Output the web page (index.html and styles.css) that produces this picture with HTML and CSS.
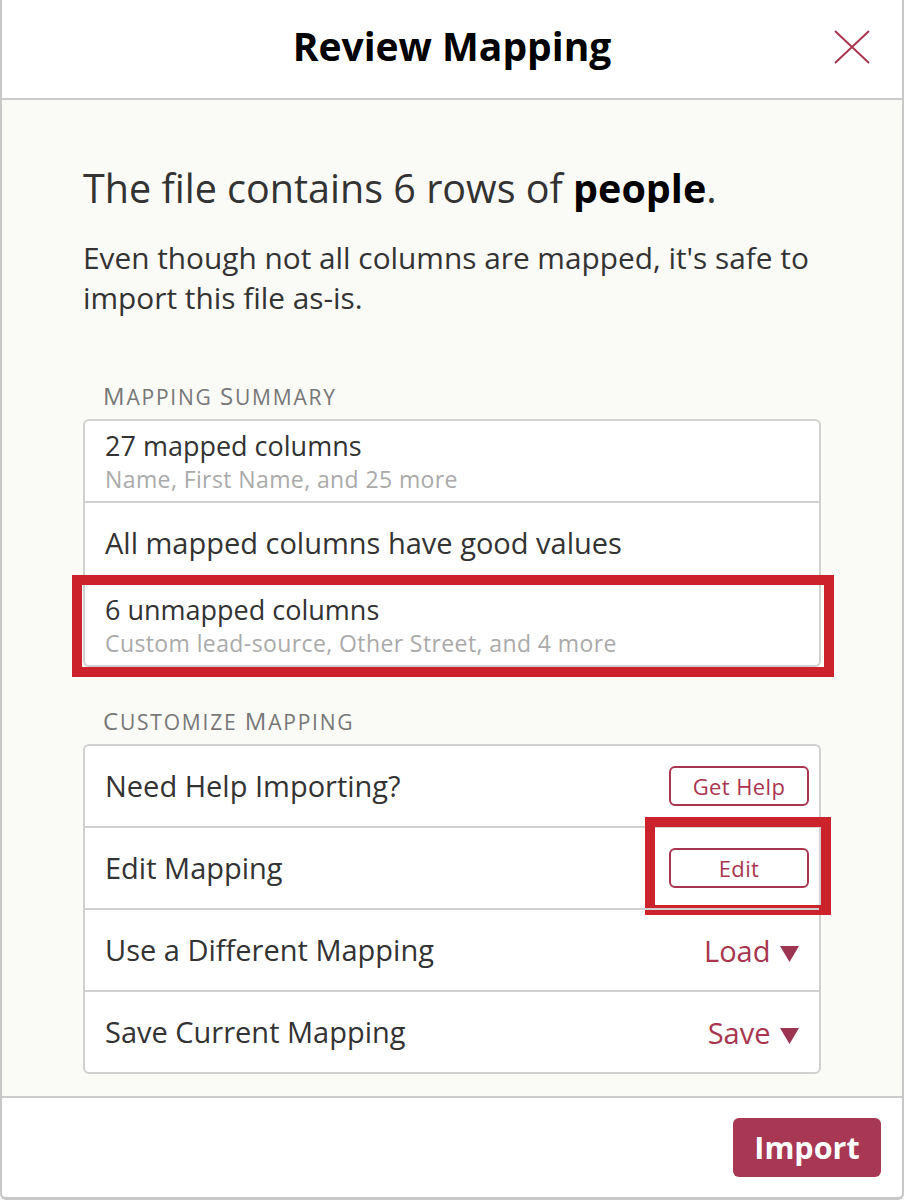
FILE: index.html
```html
<!DOCTYPE html>
<html lang="en">
<head>
    <meta charset="UTF-8">
    <title>Review Mapping</title>
    <link rel="stylesheet" href="styles.css">
</head>
<body>
    <div class="modal">
        <div class="header">
            <h1 class="title">Review Mapping</h1>
            <span class="close">
                <svg width="36" height="34" viewBox="0 0 36 34">
                    <path d="M1 1L35 33M35 1L1 33" stroke="#a8364f" stroke-width="2" fill="none"/>
                </svg>
            </span>
        </div>
        <div class="content">
            <h2 class="lead">The file contains 6 rows of <b>people</b>.</h2>
            <p class="note">Even though not all columns are mapped, it's safe to import this file as-is.</p>

            <div class="label"><span>M</span>apping <span>S</span>ummary</div>
            <div class="box">
                <div class="row two">
                    <div class="main">27 mapped columns</div>
                    <div class="sub">Name, First Name, and 25 more</div>
                </div>
                <div class="row">
                    <div class="main big">All mapped columns have good values</div>
                </div>
                <div class="row two mark">
                    <div class="main">6 unmapped columns</div>
                    <div class="sub">Custom lead-source, Other Street, and 4 more</div>
                </div>
            </div>

            <div class="label second"><span>C</span>ustomize <span>M</span>apping</div>
            <div class="box">
                <div class="row">
                    <div class="main big">Need Help Importing?</div>
                    <span class="btn">Get Help</span>
                </div>
                <div class="row">
                    <div class="main big">Edit Mapping</div>
                    <span class="btn mark-btn">Edit</span>
                </div>
                <div class="row">
                    <div class="main big">Use a Different Mapping</div>
                    <span class="drop">Load <svg width="19" height="16" viewBox="0 0 19 16"><path d="M0 0H19L9.5 16Z" fill="#9b3552"/></svg></span>
                </div>
                <div class="row">
                    <div class="main big">Save Current Mapping</div>
                    <span class="drop">Save <svg width="19" height="16" viewBox="0 0 19 16"><path d="M0 0H19L9.5 16Z" fill="#9b3552"/></svg></span>
                </div>
            </div>
        </div>
        <div class="footer">
            <span class="import">Import</span>
        </div>
    </div>
</body>
</html>
```

FILE: styles.css
```css
*{
    padding: 0;
    margin: 0;
    box-sizing: border-box;
}
body{
    font-family: "Open Sans", "Liberation Sans", sans-serif;
    color: #333;
    background-color: #fff;
}
.modal{
    width: 904px;
    height: 1200px;
    border: 2px solid #c8c8c8;
    border-top: 0;
    border-bottom-width: 3px;
    border-radius: 0 0 6px 6px;
    display: flex;
    flex-direction: column;
    background-color: #fafaf6;
}
.header{
    position: relative;
    height: 100px;
    padding-bottom: 8px;
    background-color: #fff;
    border-bottom: 2px solid #cccccc;
    display: flex;
    justify-content: center;
    align-items: center;
}
.title{
    font-size: 39px;
    font-weight: 700;
    color: #000;
}
.close{
    position: absolute;
    right: 32px;
    top: 30px;
    line-height: 0;
}
.content{
    flex: 1;
    padding: 0 81px;
}
.lead{
    margin-top: 65px;
    font-size: 39.5px;
    line-height: 46px;
    font-weight: 400;
    color: #333;
}
.lead b{
    font-weight: 700;
    color: #000;
}
.note{
    margin-top: 27px;
    font-size: 29.8px;
    line-height: 40px;
    color: #333;
}
.label{
    height: 24px;
    margin: 66px 0 11px 20px;
    font-size: 21px;
    line-height: 24px;
    letter-spacing: 1.8px;
    text-transform: uppercase;
    color: #777;
}
.label span{
    font-size: 24px;
}
.label.second{
    margin-top: 42px;
}
.box{
    border: 2px solid #d0d0d0;
    border-radius: 6px;
    background-color: #fff;
}
.row{
    height: 82px;
    padding: 0 10px 0 20px;
    display: flex;
    align-items: center;
    justify-content: space-between;
    border-top: 2px solid #d0d0d0;
    position: relative;
}
.row:first-child{
    border-top: 0;
    height: 80px;
}
.row.two{
    flex-direction: column;
    align-items: flex-start;
    justify-content: center;
}
.main{
    font-size: 27px;
    line-height: 32px;
    color: #333;
}
.main.big{
    font-size: 29px;
    line-height: 36px;
}
.sub{
    font-size: 23px;
    line-height: 28px;
    letter-spacing: 0.4px;
    color: #aaa;
    margin-top: 3px;
}
.mark::after{
    content: '';
    position: absolute;
    left: -13px;
    right: -15px;
    top: -10px;
    bottom: -12px;
    border: 10px solid #cc222b;
}
.btn{
    width: 140px;
    height: 40px;
    border: 2px solid #a8364f;
    border-radius: 6px;
    color: #a8364f;
    font-size: 22px;
    letter-spacing: 0.4px;
    text-align: center;
    line-height: 36px;
    position: relative;
}
.mark-btn::after{
    content: '';
    position: absolute;
    left: -26px;
    right: -24px;
    top: -33px;
    bottom: -29px;
    border: 10px solid #cc222b;
}
.drop{
    color: #a8364f;
    font-size: 29px;
    margin-right: 10px;
}
.drop svg{
    vertical-align: baseline;
    margin-left: 2px;
}
.footer{
    height: 101px;
    border-top: 2px solid #cccccc;
    background-color: #fff;
    border-radius: 0 0 6px 6px;
    display: flex;
    justify-content: flex-end;
    align-items: flex-start;
    padding: 20px 21px 0 0;
}
.import{
    width: 148px;
    height: 59px;
    border-radius: 6px;
    background-color: #a73753;
    color: #fff;
    font-size: 30.5px;
    font-weight: 700;
    text-align: center;
    line-height: 58px;
}
```
